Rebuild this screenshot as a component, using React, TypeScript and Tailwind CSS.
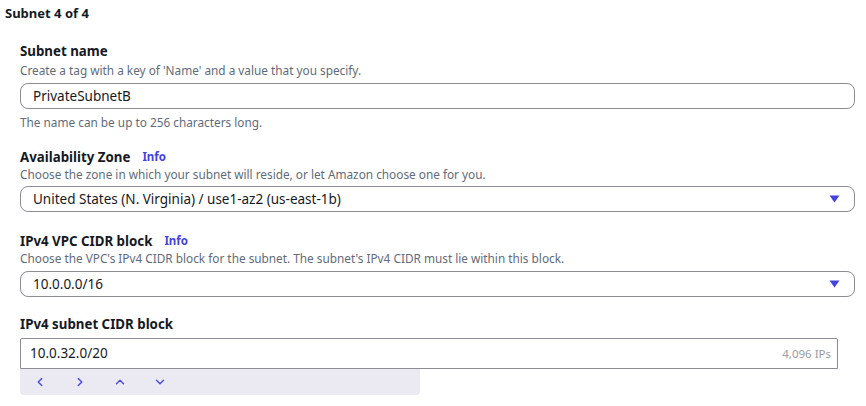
import { ChevronLeft, ChevronRight, ChevronUp, ChevronDown } from 'lucide-react'

function Caret() {
  return (
    <svg width="11" height="8" viewBox="0 0 11 8" className="shrink-0">
      <path d="M0.5 0.5 H10.5 L5.5 7.5 Z" fill="#4343e0" />
    </svg>
  )
}

function Label({ text, info }: { text: string; info?: boolean }) {
  return (
    <div className="flex items-center h-[18px] text-[13.3px] font-bold text-[#16191f] leading-[18px]">
      <span>{text}</span>
      {info && <span className="ml-[12px] text-[11.5px] font-bold text-[#4343e0]">Info</span>}
    </div>
  )
}

function Desc({ text }: { text: string }) {
  return <div className="h-[16px] text-[11.8px] leading-[16px] text-[#5f6b7a]">{text}</div>
}

function Select({ value }: { value: string }) {
  return (
    <div className="h-[26px] flex items-center justify-between border border-[#8c8c94] rounded-[8px] pl-[12px] pr-[14px] text-[13.5px] text-[#16191f]">
      <span>{value}</span>
      <Caret />
    </div>
  )
}

export default function App() {
  return (
    <div className="w-[866px] h-[406px] bg-white overflow-hidden font-['Noto_Sans',sans-serif]">
      <div className="pl-[5px] h-[26px] leading-[26px] text-[13px] font-bold text-[#16191f]">Subnet 4 of 4</div>

      <div className="pl-[20px] pr-[11px]">
        <div className="mt-[16px]">
          <Label text="Subnet name" />
          <div className="mt-[2px]">
            <Desc text="Create a tag with a key of 'Name' and a value that you specify." />
          </div>
          <div className="mt-[5px] h-[26px] flex items-center border border-[#8c8c94] rounded-[8px] px-[12px] text-[13.5px] text-[#16191f]">
            PrivateSubnetB
          </div>
          <div className="mt-[5px]">
            <Desc text="The name can be up to 256 characters long." />
          </div>
        </div>

        <div className="mt-[18px]">
          <Label text="Availability Zone" info />
          <Desc text="Choose the zone in which your subnet will reside, or let Amazon choose one for you." />
          <div className="mt-[4px]">
            <Select value="United States (N. Virginia) / use1-az2 (us-east-1b)" />
          </div>
        </div>

        <div className="mt-[20px]">
          <Label text="IPv4 VPC CIDR block" info />
          <Desc text="Choose the VPC's IPv4 CIDR block for the subnet. The subnet's IPv4 CIDR must lie within this block." />
          <div className="mt-[5px]">
            <Select value="10.0.0.0/16" />
          </div>
        </div>

        <div className="mt-[18px]">
          <Label text="IPv4 subnet CIDR block" />
          <div className="mt-[5px] w-[818px] h-[31px] flex items-center justify-between border border-[#8c8c94] rounded-t-[2px] pl-[9px] pr-[6px]">
            <span className="text-[13.5px] text-[#16191f]">10.0.32.0/20</span>
            <span className="text-[11.5px] text-[#9a9aa2]">4,096 IPs</span>
          </div>
          <div className="w-[400px] h-[26px] bg-[#ebe9f1] rounded-b-[4px] flex items-center pl-[13px] gap-[26px] text-[#4b4ee6]">
            <ChevronLeft size={14} strokeWidth={2.5} />
            <ChevronRight size={14} strokeWidth={2.5} />
            <ChevronUp size={14} strokeWidth={2.5} />
            <ChevronDown size={14} strokeWidth={2.5} />
          </div>
        </div>
      </div>
    </div>
  )
}
